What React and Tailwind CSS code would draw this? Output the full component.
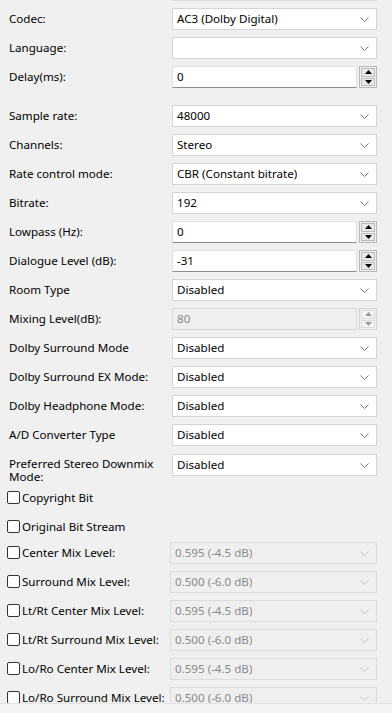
import React from 'react';

const font = { fontFamily: '"Segoe UI", "Noto Sans", sans-serif' };

const Chevron = ({ disabled }) => (
  <svg width="9" height="5" viewBox="0 0 9 5" className="shrink-0">
    <path d="M0.5 0.5 L4.5 4.5 L8.5 0.5" fill="none" stroke={disabled ? '#c4c4c4' : '#7a7a7a'} strokeWidth="1" />
  </svg>
);

const Combo = ({ value, disabled }) => (
  <div
    className={
      'flex-1 h-[22px] flex items-center justify-between pl-[4px] pr-[7px] border ' +
      (disabled ? 'bg-[#efefef] border-[#dcdcdc] text-[#8a8a8a]' : 'bg-white border-[#d5d5d5] text-black')
    }
  >
    <span className="truncate">{value}</span>
    <Chevron disabled={disabled} />
  </div>
);

const Arrow = ({ up, disabled }) => (
  <svg width="7" height="4" viewBox="0 0 7 4">
    <path d={up ? 'M0 4 L3.5 0 L7 4 Z' : 'M0 0 L3.5 4 L7 0 Z'} fill={disabled ? '#9a9a9a' : '#000'} />
  </svg>
);

const Spin = ({ value, disabled }) => (
  <div className="flex-1 h-[22px] flex gap-[2px]">
    <div
      className={
        'flex-1 flex items-center pl-[4px] border ' +
        (disabled
          ? 'bg-[#efefef] border-[#d8d8d8] text-[#8a8a8a]'
          : 'bg-white border-[#e0e0e0] border-b-[#8c8c8c] text-black')
      }
    >
      {value}
    </div>
    <div className={'w-[18px] flex flex-col gap-[1px] border p-[1px] ' + (disabled ? 'border-[#d4d4d4]' : 'border-[#b8b8b8]')}>
      <div className={'flex-1 flex items-center justify-center border ' + (disabled ? 'bg-[#f4f4f4] border-[#dadada]' : 'bg-[#e8e8e8] border-[#bcbcbc]')}>
        <Arrow up disabled={disabled} />
      </div>
      <div className={'flex-1 flex items-center justify-center border ' + (disabled ? 'bg-[#f4f4f4] border-[#dadada]' : 'bg-[#e8e8e8] border-[#bcbcbc]')}>
        <Arrow disabled={disabled} />
      </div>
    </div>
  </div>
);

const Row = ({ label, children, className = '' }) => (
  <div className={'flex items-center h-[22px] ' + className}>
    <div className="w-[163px] shrink-0">{label}</div>
    {children}
  </div>
);

const Check = ({ label, children, className = 'h-[22px]' }) => (
  <div className={'flex items-center ' + className}>
    <div className="w-[163px] shrink-0 flex items-center -ml-[2px] gap-[2px]">
      <span className="w-[13px] h-[13px] border border-[#333] rounded-[2px] bg-white shrink-0" />
      <span className="whitespace-nowrap">{label}</span>
    </div>
    {children}
  </div>
);

const mixRows = [
  ['Center Mix Level:', '0.595 (-4.5 dB)'],
  ['Surround Mix Level:', '0.500 (-6.0 dB)'],
  ['Lt/Rt Center Mix Level:', '0.595 (-4.5 dB)'],
  ['Lt/Rt Surround Mix Level:', '0.500 (-6.0 dB)'],
  ['Lo/Ro Center Mix Level:', '0.595 (-4.5 dB)'],
  ['Lo/Ro Surround Mix Level:', '0.500 (-6.0 dB)'],
];

export default function App() {
  return (
    <div className="w-[392px] h-[713px] bg-[#f0f0f0] flex flex-col overflow-hidden text-[11.6px] text-black" style={font}>
      <div className="h-[704px] shrink-0 overflow-hidden border-b border-[#e3e3e3]">
        <div className="flex flex-col gap-[7px] pl-[9px] pr-[15px] -mt-[21px]">
          {/* cut-off control from above */}
          <Row label="">
            <div className="flex-1 h-[22px] bg-[#efefef] border border-[#dcdcdc]" />
          </Row>
          <Row label="Codec:"><Combo value="AC3 (Dolby Digital)" /></Row>
          <Row label="Language:"><Combo value="" /></Row>
          <Row label="Delay(ms):"><Spin value="0" /></Row>

          <Row label="Sample rate:" className="mt-[10px]"><Combo value="48000" /></Row>
          <Row label="Channels:"><Combo value="Stereo" /></Row>
          <Row label="Rate control mode:"><Combo value="CBR (Constant bitrate)" /></Row>
          <Row label="Bitrate:"><Combo value="192" /></Row>
          <Row label="Lowpass (Hz):"><Spin value="0" /></Row>
          <Row label="Dialogue Level (dB):"><Spin value="-31" /></Row>
          <Row label="Room Type"><Combo value="Disabled" /></Row>
          <Row label="Mixing Level(dB):"><Spin value="80" disabled /></Row>
          <Row label="Dolby Surround Mode"><Combo value="Disabled" /></Row>
          <Row label="Dolby Surround EX Mode:"><Combo value="Disabled" /></Row>
          <Row label="Dolby Headphone Mode:"><Combo value="Disabled" /></Row>
          <Row label="A/D Converter Type"><Combo value="Disabled" /></Row>
          <div className="flex items-start h-[26px] mt-[1px]">
            <div className="w-[163px] shrink-0 leading-[13px] pt-[3px]">Preferred Stereo Downmix Mode:</div>
            <Combo value="Disabled" />
          </div>

          <Check label="Copyright Bit" className="h-[20px] mt-[1px]" />
          <Check label="Original Bit Stream" className="h-[20px] mt-[2px]" />
          {mixRows.map(([label, value], i) => (
            <Check key={label} label={label} className={i === 0 ? 'h-[22px] -mt-[2px]' : 'h-[22px]'}>
              <Combo value={value} disabled />
            </Check>
          ))}
        </div>
      </div>
      <div className="flex-1 bg-[#f3f3f3]" />
    </div>
  );
}
